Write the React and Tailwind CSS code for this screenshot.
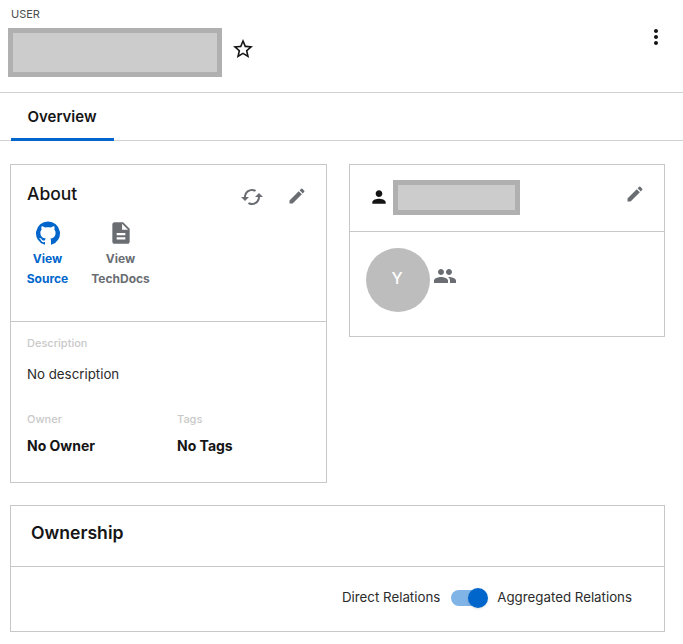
import React from "react";

// material icon paths
const icons = {
  star: "M22 9.24l-7.19-.62L12 2 9.19 8.63 2 9.24l5.46 4.73L5.82 21 12 17.27 18.18 21l-1.63-7.03L22 9.24zM12 15.4l-3.76 2.27 1-4.28-3.32-2.88 4.38-.38L12 6.1l1.71 4.04 4.38.38-3.32 2.88 1 4.28L12 15.4z",
  more: "M12 8c1.1 0 2-.9 2-2s-.9-2-2-2-2 .9-2 2 .9 2 2 2zm0 2c-1.1 0-2 .9-2 2s.9 2 2 2 2-.9 2-2-.9-2-2-2zm0 6c-1.1 0-2 .9-2 2s.9 2 2 2 2-.9 2-2-.9-2-2-2z",
  cached: "M19 8l-4 4h3c0 3.31-2.69 6-6 6-1.01 0-1.97-.25-2.8-.7l-1.46 1.46C8.97 19.54 10.43 20 12 20c4.42 0 8-3.58 8-8h3l-4-4zM6 12c0-3.31 2.69-6 6-6 1.01 0 1.97.25 2.8.7l1.46-1.46C15.03 4.46 13.57 4 12 4c-4.42 0-8 3.58-8 8H1l4 4 4-4H6z",
  edit: "M3 17.25V21h3.75L17.81 9.94l-3.75-3.75L3 17.25zM20.71 7.04c.39-.39.39-1.02 0-1.41l-2.34-2.34a.9959.9959 0 00-1.41 0l-1.83 1.83 3.75 3.75 1.83-1.83z",
  doc: "M14 2H6c-1.1 0-1.99.9-1.99 2L4 20c0 1.1.89 2 1.99 2H18c1.1 0 2-.9 2-2V8l-6-6zm2 16H8v-2h8v2zm0-4H8v-2h8v2zm-3-5V3.5L18.5 9H13z",
  person: "M12 12c2.21 0 4-1.79 4-4s-1.79-4-4-4-4 1.79-4 4 1.79 4 4 4zm0 2c-2.67 0-8 1.34-8 4v2h16v-2c0-2.66-5.33-4-8-4z",
  people: "M16 11c1.66 0 2.99-1.34 2.99-3S17.66 5 16 5c-1.66 0-3 1.34-3 3s1.34 3 3 3zm-8 0c1.66 0 2.99-1.34 2.99-3S9.66 5 8 5C6.34 5 5 6.34 5 8s1.34 3 3 3zm0 2c-2.33 0-7 1.17-7 3.5V19h14v-2.5c0-2.33-4.67-3.5-7-3.5zm8 0c-.29 0-.62.02-.97.05 1.16.84 1.97 1.97 1.97 3.45V19h6v-2.5c0-2.33-4.67-3.5-7-3.5z",
  github: "M12 1.27a11 11 0 00-3.48 21.46c.55.09.73-.28.73-.55v-1.84c-3.03.64-3.67-1.46-3.67-1.46-.55-1.29-1.28-1.65-1.28-1.65-.92-.65.1-.65.1-.65 1.1 0 1.73 1.1 1.73 1.1.92 1.65 2.57 1.2 3.21.92a2 2 0 01.64-1.47c-2.47-.27-5.04-1.19-5.04-5.5 0-1.1.46-2.1 1.2-2.84a3.76 3.76 0 010-2.93s.91-.28 3.11 1.1c1.8-.49 3.7-.49 5.5 0 2.1-1.38 3.02-1.1 3.02-1.1a3.76 3.76 0 010 2.93c.83.74 1.2 1.74 1.2 2.94 0 4.21-2.57 5.13-5.04 5.4.45.37.82.92.82 2.02v3.03c0 .27.1.64.73.55A11 11 0 0012 1.27",
};

function Icon({ d, className }) {
  return (
    <svg viewBox="0 0 24 24" fill="currentColor" className={className}>
      <path d={d} />
    </svg>
  );
}

function Redacted({ className }) {
  return <div className={`border-[5px] border-[#b0b0b0] bg-[#cccccc] ${className}`} />;
}

export default function App() {
  return (
    <div className="min-h-[644px] bg-white font-['Inter',sans-serif] text-[#151515]">
      {/* cabecera */}
      <header className="relative h-[93px] border-b border-[#d2d2d2]">
        <div className="pl-[11px] pt-[8px] text-[11px] leading-[13px] text-[#4d4d4d]">USER</div>
        <div className="mt-[7px] ml-[8px] flex items-center">
          <Redacted className="h-[49px] w-[214px]" />
          <Icon d={icons.star} className="ml-[9px] mt-[-7px] size-6 text-[#151515]" />
        </div>
        <Icon d={icons.more} className="absolute right-[15px] top-[25px] size-6 text-[#151515]" />
      </header>

      {/* tabs */}
      <nav className="h-[48px] border-b border-[#d2d2d2] px-[11px]">
        <div className="flex h-[48px] w-[103px] items-center justify-center border-b-[3px] border-[#0066cc] pt-[3px] pr-[1px] text-[15px] font-semibold">
          Overview
        </div>
      </nav>

      <main className="pl-[10px] pt-[23px]">
        <div className="grid grid-cols-[317px_316px] items-start gap-x-[22px]">
          {/* About */}
          <section className="h-[319px] border border-[#c7c7c7]">
            <div className="h-[157px] border-b border-[#c7c7c7] px-[16px]">
              <div className="flex items-center justify-between pt-[14px]">
                <h2 className="text-[17.5px] leading-[22px] font-medium">About</h2>
                <div className="mt-[6px] mr-[3px] flex items-center gap-[23px] text-[#6a6e73]">
                  <Icon d={icons.cached} className="size-6" />
                  <Icon d={icons.edit} className="mt-[-2px] size-[20px]" />
                </div>
              </div>
              <div className="mt-[11px] flex text-center text-[12px] leading-[20px] font-bold">
                <div className="flex w-[41px] flex-col items-center text-[#0066cc]">
                  <Icon d={icons.github} className="mb-[3px] size-[26px] shrink-0" />
                  <span>View</span>
                  <span>Source</span>
                </div>
                <div className="ml-[24px] flex w-[57px] flex-col items-center text-[#6a6e73]">
                  <Icon d={icons.doc} className="mb-[3px] size-[26px] shrink-0" />
                  <span>View</span>
                  <span>TechDocs</span>
                </div>
              </div>
            </div>
            <div className="px-[16px] pt-[14px]">
              <div className="text-[11px] leading-[14px] font-medium text-[#c9c9c9]">Description</div>
              <div className="mt-[14px] text-[13.3px] leading-[20px] text-[#2b2b2b]">No description</div>
              <div className="mt-[28px] grid grid-cols-[150px_1fr]">
                <div>
                  <div className="text-[11px] leading-[14px] font-medium text-[#c9c9c9]">Owner</div>
                  <div className="mt-[10px] text-[14px] leading-[20px] font-bold">No Owner</div>
                </div>
                <div>
                  <div className="text-[11px] leading-[14px] font-medium text-[#c9c9c9]">Tags</div>
                  <div className="mt-[10px] text-[14px] leading-[20px] font-bold">No Tags</div>
                </div>
              </div>
            </div>
          </section>

          {/* grupo */}
          <section className="h-[173px] border border-[#c7c7c7]">
            <div className="flex h-[67px] items-center border-b border-[#c7c7c7] pr-[19px] pl-[19px]">
              <Icon d={icons.person} className="mt-[-3px] size-5 shrink-0 text-[#151515]" />
              <Redacted className="mt-[-2px] ml-[4px] h-[35px] w-[127px]" />
              <Icon d={icons.edit} className="mt-[-8px] ml-auto size-[20px] text-[#6a6e73]" />
            </div>
            <div className="flex items-center pt-[16px] pl-[16px]">
              <div className="flex size-16 items-center justify-center rounded-full bg-[#bdbdbd] pr-[2px] pb-[4px] text-[16px] font-medium text-white">
                Y
              </div>
              <Icon d={icons.people} className="ml-[3px] mt-[-8px] size-6 text-[#6a6e73]" />
            </div>
          </section>
        </div>

        {/* Ownership */}
        <section className="mt-[22px] h-[127px] w-[655px] border border-[#c7c7c7]">
          <div className="flex h-[61px] items-center border-b border-[#c7c7c7] pl-[20px]">
            <h2 className="mb-[6px] text-[17.6px] font-semibold">Ownership</h2>
          </div>
          <div className="flex h-[64px] items-center justify-end pr-[32px] text-[13.3px] text-[#2b2b2b]">
            <span className="mb-[2px]">Direct Relations</span>
            <div className="relative mx-[10px] mb-[2px] ml-[11px] h-[16px] w-[36px] rounded-full bg-[#80b3e6]">
              <div className="absolute top-[-2px] right-[-1px] size-[20px] rounded-full bg-[#0066cc] shadow-sm" />
            </div>
            <span className="mb-[2px]">Aggregated Relations</span>
          </div>
        </section>
      </main>
    </div>
  );
}
